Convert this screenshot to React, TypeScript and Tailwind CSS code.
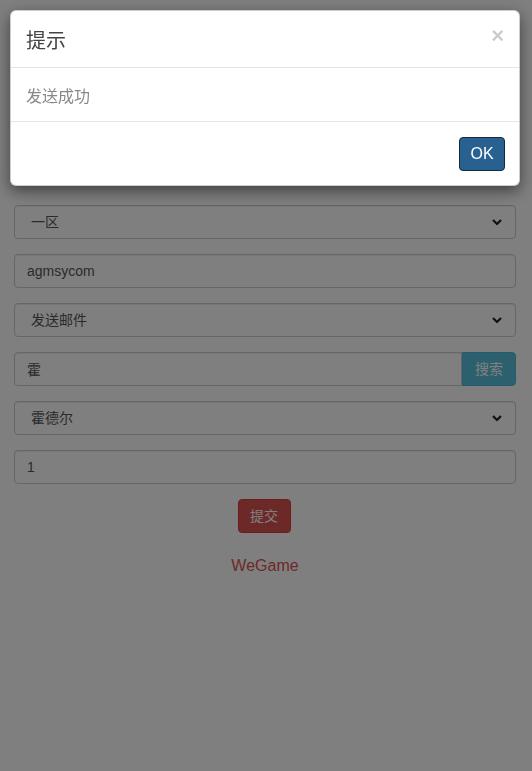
import React from 'react';

const font = { fontFamily: '"Liberation Sans", "Noto Sans CJK SC", sans-serif' };

const Chevron = () => (
  <svg
    className="pointer-events-none absolute right-[14px] top-1/2 -translate-y-1/2"
    width="10"
    height="7"
    viewBox="0 0 10 7"
  >
    <polyline points="1,1.5 5,5.5 9,1.5" fill="none" stroke="#222" strokeWidth="2.2" />
  </svg>
);

const SelectBox = ({ value }: { value: string }) => (
  <div className="relative mb-[15px]">
    <select
      defaultValue={value}
      className="h-[34px] w-full appearance-none rounded-[4px] border border-[#ccc] bg-white pl-[16px] pr-8 text-[14px] text-[#555] shadow-[inset_0_1px_1px_rgba(0,0,0,0.075)] outline-none"
    >
      <option>{value}</option>
    </select>
    <Chevron />
  </div>
);

const TextBox = ({ value }: { value: string }) => (
  <input
    defaultValue={value}
    className="mb-[15px] block h-[34px] w-full rounded-[4px] border border-[#ccc] bg-white px-3 text-[14px] text-[#555] shadow-[inset_0_1px_1px_rgba(0,0,0,0.075)] outline-none"
  />
);

export default function App() {
  return (
    <div className="relative min-h-[771px] bg-white" style={font}>
      <div className="pl-[14px] pr-[16px] pt-[205px]">
        <SelectBox value="一区" />
        <TextBox value="agmsycom" />
        <SelectBox value="发送邮件" />
        <div className="mb-[15px] flex h-[34px]">
          <input
            defaultValue="霍"
            className="h-full min-w-0 flex-1 rounded-l-[4px] border border-[#ccc] bg-white px-3 text-[14px] text-[#555] shadow-[inset_0_1px_1px_rgba(0,0,0,0.075)] outline-none"
          />
          <button className="h-full w-[54px] rounded-r-[4px] border border-[#46b8da] bg-[#5bc0de] text-[14px] text-white">
            搜索
          </button>
        </div>
        <SelectBox value="霍德尔" />
        <TextBox value="1" />
        <div className="flex justify-center pr-[2px]">
          <button className="h-[34px] w-[53px] rounded-[4px] border border-[#d43f3a] bg-[#d9534f] text-[14px] text-white">
            提交
          </button>
        </div>
        <p className="mt-[21px] text-center text-[16px] leading-[23px] text-[#d9534f]">WeGame</p>
      </div>

      {/* backdrop */}
      <div className="fixed inset-0 bg-black/50" />

      {/* modal */}
      <div className="fixed left-[10px] top-[10px] w-[510px] rounded-[6px] border border-black/20 bg-white shadow-[0_5px_15px_rgba(0,0,0,0.5)]">
        <div className="flex items-start justify-between border-b border-[#e5e5e5] px-[15px] pb-[13px] pt-[17px]">
          <h4 className="text-[20px] leading-[26px] text-[#444]">提示</h4>
          <button className="mt-[-3px] text-[22px] font-bold leading-none text-black opacity-20">×</button>
        </div>
        <div className="border-b border-[#e5e5e5] px-[15px] pb-[13px] pt-[17px] text-[16px] leading-[23px] text-[#888]">
          发送成功
        </div>
        <div className="flex justify-end pb-[14px] pr-[14px] pt-[15px]">
          <button className="h-[34px] w-[46px] rounded-[4px] border border-[#122b40] bg-[#286090] text-[16px] text-white">
            OK
          </button>
        </div>
      </div>
    </div>
  );
}
